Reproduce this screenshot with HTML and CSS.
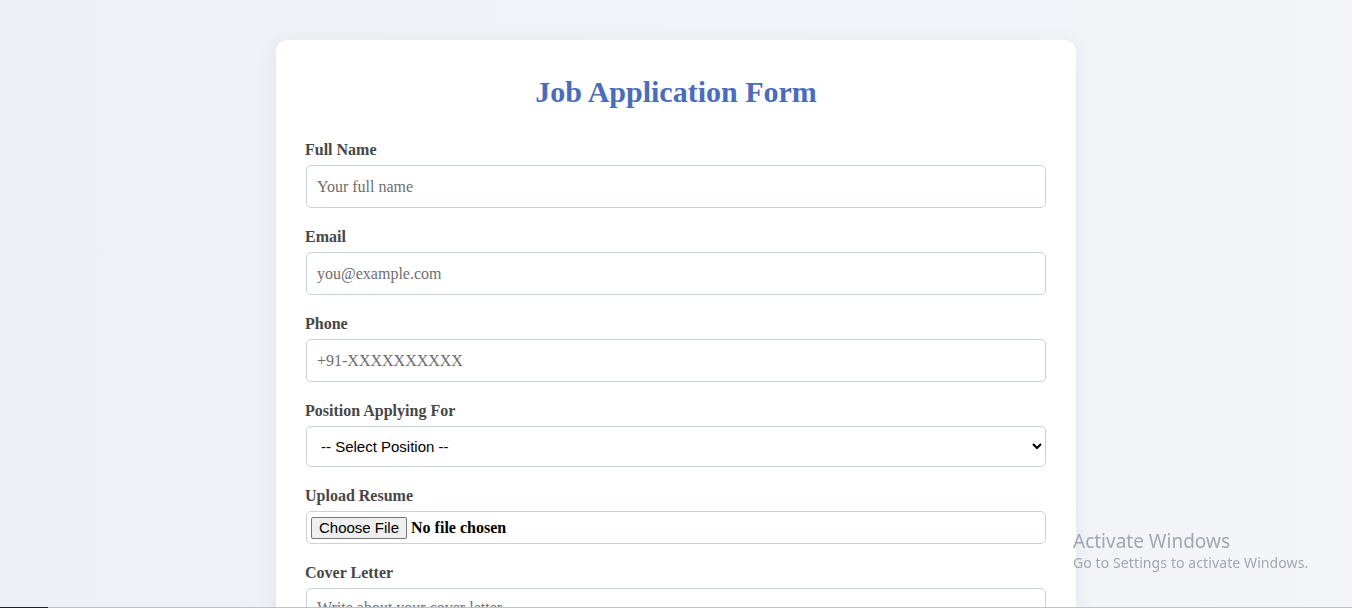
FILE: index.html
```html
<!DOCTYPE html>
<html lang="en">
<head>
<meta charset="utf-8">
<title>Job Application Form</title>
<link rel="stylesheet" href="styles.css">
</head>
<body>
<div class="card">
  <h1 class="title">Job Application Form</h1>
  <form class="form">
    <div class="group">
      <label class="label" for="name">Full Name</label>
      <input class="field" id="name" type="text" placeholder="Your full name">
    </div>
    <div class="group">
      <label class="label" for="email">Email</label>
      <input class="field" id="email" type="email" placeholder="you@example.com">
    </div>
    <div class="group">
      <label class="label" for="phone">Phone</label>
      <input class="field" id="phone" type="tel" placeholder="+91-XXXXXXXXXX">
    </div>
    <div class="group">
      <label class="label" for="pos">Position Applying For</label>
      <select class="select" id="pos">
        <option>-- Select Position --</option>
        <option>Frontend Developer</option>
        <option>Backend Developer</option>
      </select>
    </div>
    <div class="group">
      <label class="label" for="resume">Upload Resume</label>
      <div class="file">
        <span class="file-btn">Choose File</span>
        <span class="file-text">No file chosen</span>
      </div>
    </div>
    <div class="group">
      <label class="label" for="cover">Cover Letter</label>
      <textarea class="area" id="cover" rows="5" placeholder="Write about your cover letter..."></textarea>
    </div>
  </form>
</div>
<div class="watermark">
  <div class="wm-title">Activate Windows</div>
  <div class="wm-sub">Go to Settings to activate Windows.</div>
</div>
<div class="bottom-line"><span class="bl-dark"></span></div>
</body>
</html>
```

FILE: styles.css
```css
html { overflow: hidden; }
body {
  margin: 0;
  padding: 40px 0;
  min-height: 608px;
  background: linear-gradient(90deg, #edf0f5 0%, #f0f3f7 50%, #f3f5f9 100%);
  font-family: "Liberation Serif", "Times New Roman", serif;
}
.card {
  width: 800px;
  box-sizing: border-box;
  margin: 0 auto;
  padding: 30px 30px;
  background: #fff;
  border-radius: 12px;
  box-shadow: 0 4px 22px rgba(40, 60, 100, 0.07);
}
.title {
  margin: 0 0 27px;
  text-align: center;
  font-size: 30px;
  line-height: 44px;
  font-weight: 700;
  color: #4a6cba;
}
.form { display: flex; flex-direction: column; gap: 20px; }
.group { display: flex; flex-direction: column; }
.label {
  display: block;
  margin: 0 0 6px -1px;
  font-size: 16px;
  line-height: 18px;
  font-weight: 700;
  color: #474747;
}
.field, .area {
  box-sizing: border-box;
  width: 100%;
  height: 43px;
  padding: 0 10px;
  border: 1px solid #c9d1dc;
  border-radius: 5px;
  font-family: "Liberation Serif", "Times New Roman", serif;
  font-size: 16px;
  color: #222;
  background: #fff;
  outline: none;
}
.field::placeholder, .area::placeholder { color: #6e6e6e; }
.area { height: 110px; padding: 10px; resize: vertical; }
.select {
  box-sizing: border-box;
  width: 100%;
  height: 41px;
  padding: 0 10px;
  border: 1px solid #c9d1dc;
  border-radius: 5px;
  font-family: "Liberation Sans", Arial, sans-serif;
  font-size: 15px;
  color: #000;
  background: #fff;
}
.file {
  box-sizing: border-box;
  height: 33px;
  display: flex;
  align-items: center;
  gap: 4px;
  padding: 0 4px;
  border: 1px solid #c9d1dc;
  border-radius: 5px;
}
.file-btn {
  box-sizing: border-box;
  height: 22px;
  display: flex;
  align-items: center;
  padding: 0 7px;
  border: 1px solid #767676;
  border-radius: 2px;
  background: #efefef;
  font-family: "Liberation Sans", Arial, sans-serif;
  font-size: 15px;
  color: #000;
}
.file-text {
  font-size: 16px;
  font-weight: 700;
  color: #000;
}
.watermark {
  position: fixed;
  left: 1073px;
  top: 529px;
  font-family: "Noto Sans", "Open Sans", sans-serif;
  color: #a3a7ad;
}
.wm-title { font-size: 19px; line-height: 24px; }
.wm-sub { font-size: 14px; line-height: 20px; letter-spacing: 0.1px; }
.bottom-line {
  position: fixed;
  left: 0;
  right: 0;
  bottom: 0;
  height: 1px;
  background: #bfc1c4;
}
.bl-dark { display: block; width: 48px; height: 1px; background: #222; }
```
